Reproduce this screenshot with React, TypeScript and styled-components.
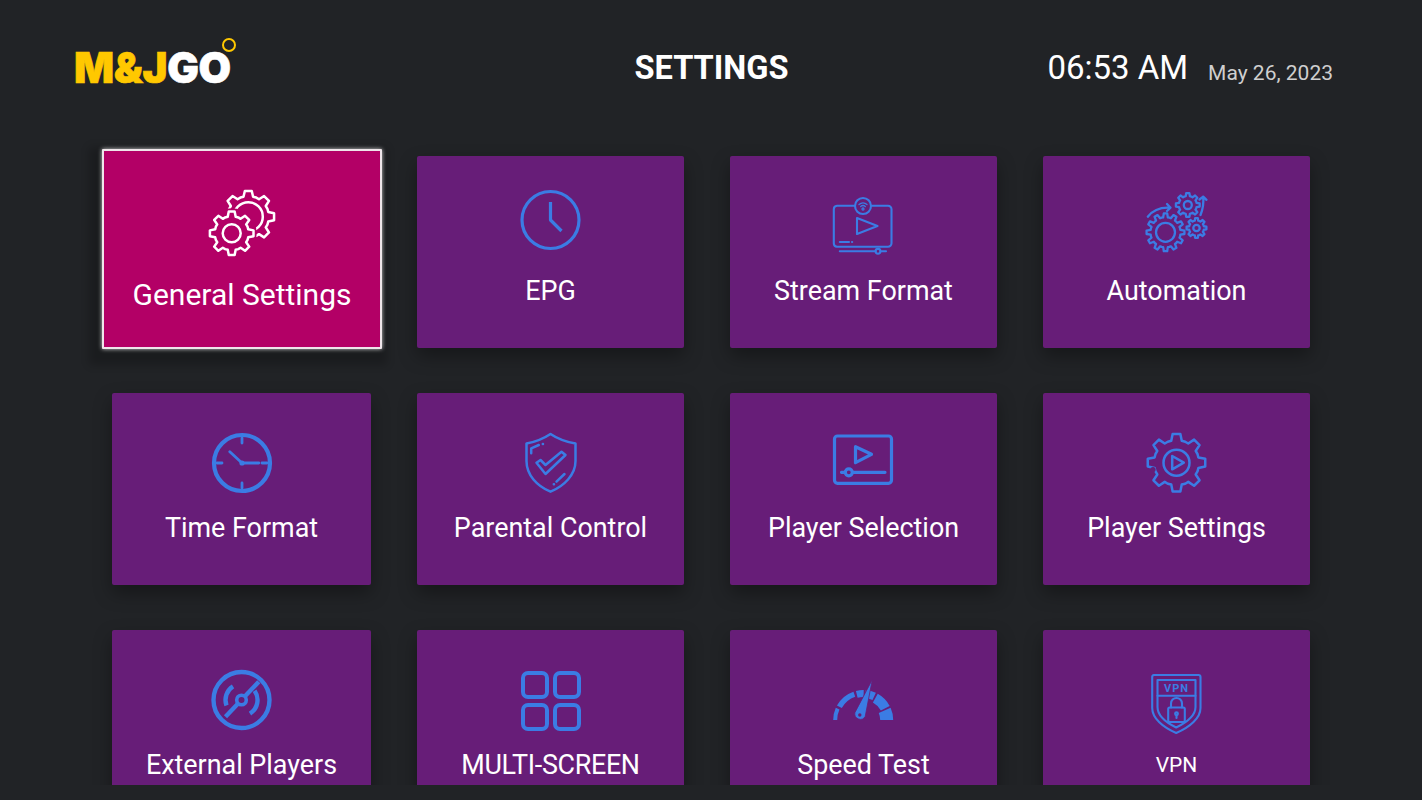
import React from 'react';
import styled, { createGlobalStyle } from 'styled-components';

const GlobalStyle = createGlobalStyle`
  html, body {
    margin: 0;
    padding: 0;
    background: #212326;
  }
  body {
    font-family: Roboto, "Liberation Sans", sans-serif;
  }
`;

const Page = styled.div`
  width: 1422px;
  height: 800px;
  overflow: hidden;
  background: #212326;
  color: #fff;
`;

const Header = styled.header`
  height: 136px;
  box-sizing: border-box;
  padding: 0 75px;
  display: grid;
  grid-template-columns: 1fr auto 1fr;
  align-items: center;
`;

const Logo = styled.div`
  position: relative;
  justify-self: start;
  margin-left: -1px;
  font-family: Inter, "Liberation Sans", sans-serif;
  font-weight: 900;
  font-size: 42px;
  line-height: 42px;
  letter-spacing: -0.4px;
  -webkit-text-stroke: 0.6px currentColor;
  color: #fff;
`;

const LogoAccent = styled.span`
  color: #ffc800;
`;

const LogoRing = styled.span`
  position: absolute;
  top: -9px;
  right: -5px;
  width: 10px;
  height: 10px;
  border: 2.5px solid #ffc800;
  border-radius: 50%;
`;

const Title = styled.h1`
  margin: 0 0 0 1px;
  font-size: 32.6px;
  line-height: 40px;
  font-weight: 700;
`;

const Clock = styled.div`
  justify-self: end;
  display: flex;
  align-items: center;
  gap: 20px;
  padding-right: 14px;
`;

const Time = styled.span`
  font-size: 33px;
  line-height: 40px;
`;

const DateText = styled.span`
  margin-top: 10px;
  font-size: 21px;
  color: #cfcfcf;
`;

const Viewport = styled.main`
  height: 649px;
  overflow: hidden;
  box-sizing: border-box;
  padding: 20px 0 0 112px;
`;

const Grid = styled.div`
  display: grid;
  grid-template-columns: 259px repeat(3, 267px);
  grid-auto-rows: 192px;
  column-gap: 46px;
  row-gap: 45px;
`;

const Card = styled.div<{ $focused?: boolean; $low?: boolean }>`
  display: flex;
  flex-direction: column;
  align-items: center;
  box-sizing: border-box;
  border-radius: 2px;
  padding-top: ${p => (p.$low ? '34px' : '28px')};
  background: #671d78;
  color: #3b7ce4;
  box-shadow: 0 8px 18px rgba(0, 0, 0, 0.34);

  ${p =>
    p.$focused &&
    `
    margin: -7px -11px -1px -10px;
    padding-top: 32px;
    border: 2px solid #efe6ea;
    border-radius: 1px;
    background: #b30066;
    color: #fff;
    box-shadow: 0 0 4px rgba(255, 255, 255, 0.8), -4px 7px 8px 9px rgba(0, 0, 0, 0.2);
  `}
`;

const Label = styled.div<{ $focused?: boolean; $low?: boolean; $small?: boolean; $tight?: boolean }>`
  margin-top: ${p => (p.$focused ? '15px' : p.$low ? '13px' : '19px')};
  font-size: ${p => (p.$focused ? '30px' : p.$small ? '21px' : '26.9px')};
  line-height: ${p => (p.$focused ? '34px' : '32px')};
  letter-spacing: ${p => (p.$tight ? '-0.33px' : 'normal')};
  color: #fff;
  white-space: nowrap;
`;

const Glyph = styled.svg`
  display: block;
  flex: none;
  fill: none;
  stroke: currentColor;
  stroke-linecap: round;
  stroke-linejoin: round;
`;

const GlyphText = styled.text`
  font-family: Roboto, "Liberation Sans", sans-serif;
  font-weight: 700;
  font-size: 11px;
  letter-spacing: 1px;
  text-anchor: middle;
  fill: currentColor;
  stroke: none;
`;

// outline of a cog, teeth pointing out, tooth 0 straight up
const gearPath = (cx: number, cy: number, R: number, r: number, teeth: number) => {
  const period = (Math.PI * 2) / teeth;
  const pts: string[] = [];
  const pt = (a: number, rad: number) =>
    `${(cx + rad * Math.sin(a)).toFixed(2)} ${(cy - rad * Math.cos(a)).toFixed(2)}`;
  for (let i = 0; i < teeth; i++) {
    const a = i * period;
    pts.push(pt(a - period * 0.17, R), pt(a + period * 0.17, R));
    pts.push(pt(a + period * 0.3, r), pt(a + period * 0.5, r * 1.01), pt(a + period * 0.7, r));
  }
  return `M${pts.join('L')}Z`;
};

// arc around (cx, cy), degrees counted anticlockwise from east
const arcPath = (cx: number, cy: number, r: number, from: number, to: number) => {
  const rad = (d: number) => (d * Math.PI) / 180;
  const x1 = cx + r * Math.cos(rad(from));
  const y1 = cy - r * Math.sin(rad(from));
  const x2 = cx + r * Math.cos(rad(to));
  const y2 = cy - r * Math.sin(rad(to));
  const large = Math.abs(to - from) > 180 ? 1 : 0;
  const sweep = to < from ? 1 : 0;
  return `M${x1.toFixed(2)} ${y1.toFixed(2)}A${r} ${r} 0 ${large} ${sweep} ${x2.toFixed(2)} ${y2.toFixed(2)}`;
};

const GeneralIcon = () => (
  <Glyph width={80} height={80} viewBox="0 0 80 80" strokeWidth={2.5}>
    <mask id="general-cut" maskUnits="userSpaceOnUse" x="0" y="0" width="80" height="80">
      <rect width="80" height="80" fill="#fff" stroke="none" />
      <circle cx="29.7" cy="50.3" r="25" fill="#000" stroke="none" />
    </mask>
    <g mask="url(#general-cut)">
      <path d={gearPath(46.3, 33.7, 26, 20.5, 8)} />
      <circle cx="46.3" cy="33.7" r="14.5" />
    </g>
    <path d={gearPath(29.7, 50.3, 22, 17, 8)} />
    <circle cx="29.7" cy="50.3" r="9" />
  </Glyph>
);

const EpgIcon = () => (
  <Glyph width={72} height={72} viewBox="0 0 72 72" strokeWidth={3.2}>
    <circle cx="35.5" cy="36" r="28.5" />
    <path d="M35.5 18V36L46.5 47" strokeLinecap="butt" />
  </Glyph>
);

const StreamIcon = () => (
  <Glyph width={72} height={72} viewBox="0 0 72 72" strokeWidth={2.1}>
    <path d="M27 21.7H9a3.5 3.5 0 0 0-3.2 3.5V59.2a3.5 3.5 0 0 0 3.2 3.5H60a3.5 3.5 0 0 0 3.5-3.5V25.2a3.5 3.5 0 0 0-3.5-3.5H43" />
    <circle cx="35" cy="22" r="8" />
    <path d="M31 20.5a6 6 0 0 1 8 0M32.6 22.6a3.5 3.5 0 0 1 4.8 0" strokeWidth={1.3} />
    <circle cx="35" cy="25" r="0.6" />
    <path d="M29 34L49.5 42L29 50Z" />
    <path d="M11.8 58H21M24 58H24.2M11.8 67.3H47.5M52.5 67.3H58" />
    <circle cx="50" cy="67.3" r="2.4" />
  </Glyph>
);

const AutomationIcon = () => (
  <Glyph width={72} height={72} viewBox="0 0 72 72" strokeWidth={2.3}>
    <path d={gearPath(24.5, 48.3, 19, 15, 12)} />
    <circle cx="24.5" cy="48.3" r="9.5" />
    <path d={gearPath(46.8, 21, 12, 9, 8)} />
    <circle cx="46.8" cy="21" r="4" />
    <path d={gearPath(55.5, 44, 10, 7.5, 8)} />
    <circle cx="55.5" cy="44" r="3.2" />
    <path d="M6.8 32.7C12 26 20 23 29.5 23.7M26 20L29.5 23.7L26 27" />
    <path d="M59.5 31C62 25 62.8 19 62.2 12.7M58.5 15.5L62.2 12.7L65.5 15.8" />
  </Glyph>
);

const TimeIcon = () => (
  <Glyph width={72} height={72} viewBox="0 0 72 72" strokeWidth={2.8}>
    <circle cx="36" cy="36" r="28" strokeWidth={4.2} />
    <path d="M36 11V16M36 56V61M11 36H16M56 36H61M23.8 24.7L36 36H52.8" />
    <circle cx="36" cy="36" r="1.2" />
  </Glyph>
);

const ParentalIcon = () => (
  <Glyph width={72} height={72} viewBox="0 0 72 72" strokeWidth={2.5}>
    <path d="M35.5 7C28 12 20 15 11.5 16.5V34C11.5 48 22 59 35.5 64.7C49 59 60.5 48 60.5 34V16.5C51 15 43 12 35.5 7Z" />
    <path d="M21.5 35.7L25.5 33L30.5 38L46.5 24.7L50.5 28L30.5 47Z" />
    <path d="M16.2 26.3V21.3L23.8 18M27.8 17H28M41.5 54.7L49.5 47M38.8 57.3H39" />
  </Glyph>
);

const SelectionIcon = () => (
  <Glyph width={72} height={72} viewBox="0 0 72 72" strokeWidth={3.2}>
    <rect x="6.5" y="9" width="57" height="47.3" rx="3" />
    <path d="M27.5 19.7L43.5 27.3L27.5 35.7Z" />
    <path d="M13.5 45.3H17M24.5 45.3H57" />
    <circle cx="20.8" cy="45.3" r="3.5" />
  </Glyph>
);

const PlayerSettingsIcon = () => (
  <Glyph width={72} height={72} viewBox="0 0 72 72" strokeWidth={2.5}>
    <path d={gearPath(35.5, 35.7, 29, 22.5, 8)} />
    <circle cx="35.5" cy="35.7" r="13" />
    <path d="M31.2 29L42.8 35.7L31.2 42.3Z" />
    <circle cx="12" cy="42.5" r="2.6" fill="#671d78" stroke="none" />
  </Glyph>
);

const ExternalIcon = () => (
  <Glyph width={72} height={72} viewBox="0 0 72 72" strokeWidth={4.4}>
    <circle cx="35.5" cy="36" r="28" />
    <path d="M52.8 17.7L19.5 52.7" strokeLinecap="butt" />
    <path d={arcPath(35.5, 36, 16, 122, 200)} strokeLinecap="butt" />
    <path d={arcPath(35.5, 36, 16, 35, -58)} strokeLinecap="butt" />
    <circle cx="35.5" cy="36" r="4.8" fill="#671d78" strokeWidth={3.6} />
  </Glyph>
);

const MultiIcon = () => (
  <Glyph width={72} height={72} viewBox="0 0 72 72" strokeWidth={4}>
    <rect x="8" y="9" width="24" height="24" rx="5" />
    <rect x="40" y="9" width="24" height="24" rx="5" />
    <rect x="8" y="41" width="24" height="24" rx="5" />
    <rect x="40" y="41" width="24" height="24" rx="5" />
  </Glyph>
);

const gaugeSegments = [
  { from: 180, to: 156, width: 4 },
  { from: 151, to: 109, width: 5.5 },
  { from: 104, to: 89, width: 7 },
  { from: 85, to: 65, width: 8 },
  { from: 61, to: 28, width: 10 },
  { from: 24, to: 0, width: 13 },
];

const SpeedIcon = () => (
  <Glyph width={72} height={72} viewBox="0 0 72 72">
    {gaugeSegments.map(s => (
      <path
        key={s.from}
        d={arcPath(35.2, 56, 30 - s.width / 2, s.from, s.to)}
        strokeWidth={s.width}
        strokeLinecap="butt"
      />
    ))}
    <path
      d="M44.2 16L37.2 52.5A5.6 5.6 0 0 1 26.8 49Z"
      fill="currentColor"
      stroke="#671d78"
      strokeWidth={0.8}
    />
    <circle cx="31.8" cy="51" r="1.7" fill="#671d78" stroke="none" />
  </Glyph>
);

const VpnIcon = () => (
  <Glyph width={72} height={72} viewBox="0 0 72 72" strokeWidth={2.1}>
    <path d="M13 11H57.5A2 2 0 0 1 59.5 13V44C59.5 54 49 63 35.2 69C21.5 63 11.2 54 11.2 44V13A2 2 0 0 1 13 11Z" />
    <path d="M16.5 16H54.5V43C54.5 51 45.5 58.5 35.2 63.5C25 58.5 16.5 51 16.5 43Z" />
    <path d="M16.5 31.7H54.5" />
    <GlyphText x="35.5" y="27.5">VPN</GlyphText>
    <rect x="27.2" y="43.5" width="16.6" height="14.5" rx="1.5" />
    <path d="M30 43.5V39.5a5.5 5.5 0 0 1 11 0V43.5" />
    <circle cx="35.5" cy="49.8" r="1.4" />
    <path d="M35.5 51.2V54" />
  </Glyph>
);

const items = [
  { label: 'General Settings', icon: GeneralIcon, focused: true },
  { label: 'EPG', icon: EpgIcon },
  { label: 'Stream Format', icon: StreamIcon },
  { label: 'Automation', icon: AutomationIcon },
  { label: 'Time Format', icon: TimeIcon, low: true },
  { label: 'Parental Control', icon: ParentalIcon, low: true },
  { label: 'Player Selection', icon: SelectionIcon, low: true },
  { label: 'Player Settings', icon: PlayerSettingsIcon, low: true },
  { label: 'External Players', icon: ExternalIcon, low: true },
  { label: 'MULTI-SCREEN', icon: MultiIcon, low: true, tight: true },
  { label: 'Speed Test', icon: SpeedIcon, low: true },
  { label: 'VPN', icon: VpnIcon, low: true, small: true },
];

const App: React.FC = () => {
  return (
    <Page>
      <GlobalStyle />
      <Header>
        <Logo>
          <LogoAccent>M&amp;J</LogoAccent>GO
          <LogoRing />
        </Logo>
        <Title>SETTINGS</Title>
        <Clock>
          <Time>06:53 AM</Time>
          <DateText>May 26, 2023</DateText>
        </Clock>
      </Header>
      <Viewport>
        <Grid>
          {items.map(({ label, icon: Icon, focused, low, small, tight }) => (
            <Card key={label} $focused={focused} $low={low}>
              <Icon />
              <Label $focused={focused} $low={low} $small={small} $tight={tight}>
                {label}
              </Label>
            </Card>
          ))}
        </Grid>
      </Viewport>
    </Page>
  );
};

export default App;
